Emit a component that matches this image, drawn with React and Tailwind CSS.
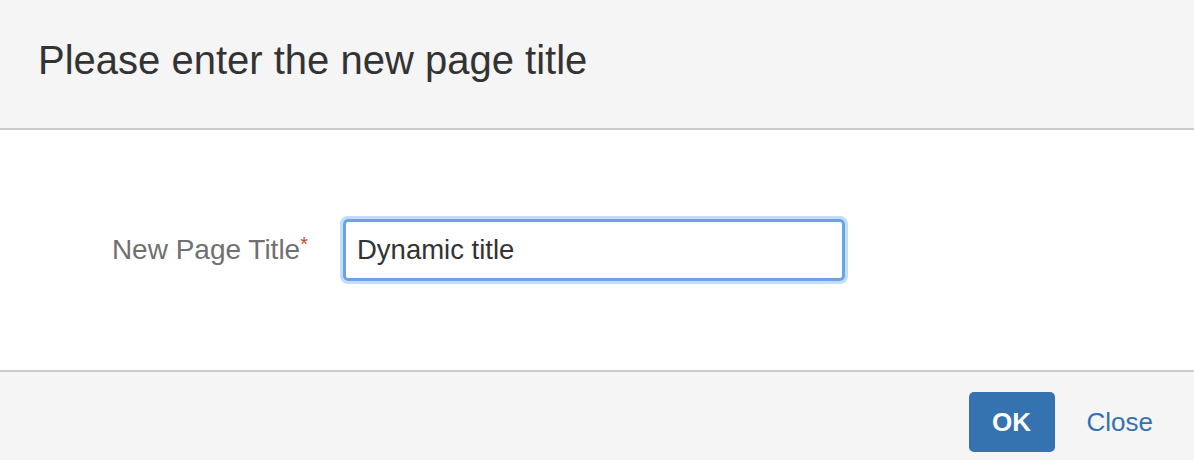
export default function App() {
  return (
    <div
      className="w-[1194px] h-[460px] bg-white flex flex-col text-[#333333]"
      style={{ fontFamily: '"Liberation Sans", Arial, sans-serif' }}
    >
      {/* header */}
      <div className="h-[130px] bg-[#f5f5f5] border-b-2 border-[#cccccc] px-[38px] pt-[37px]">
        <h1 className="text-[40px] leading-[46px] font-normal">
          Please enter the new page title
        </h1>
      </div>

      {/* body */}
      <div className="h-[240px] flex items-center">
        <div className="w-[308px] text-right text-[28px] text-[#707070] leading-[30px]">
          New Page Title
          <span className="text-[20px] text-[#d04437] align-top relative -top-[6px]">*</span>
        </div>
        <div className="ml-[35px] w-[502px] h-[62px] border-[3px] border-[#6aa3e8] rounded-[5px] shadow-[0_0_0_3px_#c2dcfa] flex items-center px-[11px]">
          <span className="text-[27.5px] text-[#333333]">Dynamic title</span>
        </div>
      </div>

      {/* footer */}
      <div className="flex-1 bg-[#f5f5f5] border-t-2 border-[#cccccc] flex items-start justify-end pt-[20px] pr-[41px]">
        <button className="w-[86px] h-[60px] bg-[#3572b0] rounded-[5px] text-white font-bold text-[26px]">
          OK
        </button>
        <button className="ml-[32px] h-[60px] text-[#3572b0] text-[26px]">
          Close
        </button>
      </div>
    </div>
  );
}
